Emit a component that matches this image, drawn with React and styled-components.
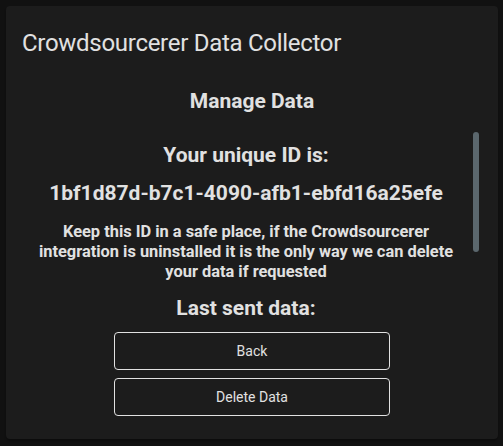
import React from "react";
import styled, { createGlobalStyle } from "styled-components";

const Global = createGlobalStyle`
  html, body { margin: 0; padding: 0; background: #111111; }
  body { font-family: "Roboto", "Liberation Sans", sans-serif; color: #e1e1e1; }
  * { box-sizing: border-box; }
`;

const Page = styled.div`
  padding: 6px 5px 7px 6px;
  height: 446px;
`;

const Card = styled.div`
  height: 433px;
  background: #1c1c1c;
  border-radius: 4px;
  box-shadow: 0 2px 2px rgba(0, 0, 0, 0.3);
  display: flex;
  flex-direction: column;
  padding: 21px 16px 0 16px;
`;

const Title = styled.div`
  font-size: 24px;
  line-height: 32px;
  font-weight: 400;
  letter-spacing: -0.012em;
`;

const Heading = styled.div`
  font-size: 21px;
  line-height: 25px;
  font-weight: 700;
  text-align: center;
  margin: ${(p) => p.$m || "0"};
`;

const ScrollWrap = styled.div`
  position: relative;
  height: 192px;
  margin-top: 18px;
`;

const Scroll = styled.div`
  height: 100%;
  overflow: hidden;
  padding-right: 12px;
`;

const Thumb = styled.div`
  position: absolute;
  top: 0;
  right: 3px;
  width: 6px;
  height: 120px;
  border-radius: 3px;
  background: #5b676d;
`;

const Inner = styled.div`
  display: flex;
  flex-direction: column;
  align-items: center;
  padding-top: 11px;
`;

const Note = styled.p`
  margin: 16px 0 0 0;
  padding: 0 12px;
  font-size: 16.4px;
  line-height: 20px;
  font-weight: 700;
  text-align: center;
`;

const Buttons = styled.div`
  display: flex;
  flex-direction: column;
  align-items: center;
  gap: 8px;
  margin-top: 8px;
`;

const Button = styled.button`
  width: 276px;
  height: 38px;
  background: transparent;
  border: 1px solid #e1e1e1;
  border-radius: 4px;
  color: #e1e1e1;
  font-family: "Roboto", "Liberation Sans", sans-serif;
  font-size: 14px;
  font-weight: 400;
  cursor: pointer;
`;

export default function App() {
  return (
    <>
      <Global />
      <Page>
        <Card>
          <Title>Crowdsourcerer Data Collector</Title>
          <Heading $m="30px 0 0 0">Manage Data</Heading>
          <ScrollWrap>
            <Scroll>
              <Inner>
                <Heading>Your unique ID is:</Heading>
                <Heading $m="13px 0 0 0">
                  1bf1d87d-b7c1-4090-afb1-ebfd16a25efe
                </Heading>
                <Note>
                  Keep this ID in a safe place, if the Crowdsourcerer
                  integration is uninstalled it is the only way we can delete
                  your data if requested
                </Note>
                <Heading $m="14px 0 0 0">Last sent data:</Heading>
              </Inner>
            </Scroll>
            <Thumb />
          </ScrollWrap>
          <Buttons>
            <Button>Back</Button>
            <Button>Delete Data</Button>
          </Buttons>
        </Card>
      </Page>
    </>
  );
}
